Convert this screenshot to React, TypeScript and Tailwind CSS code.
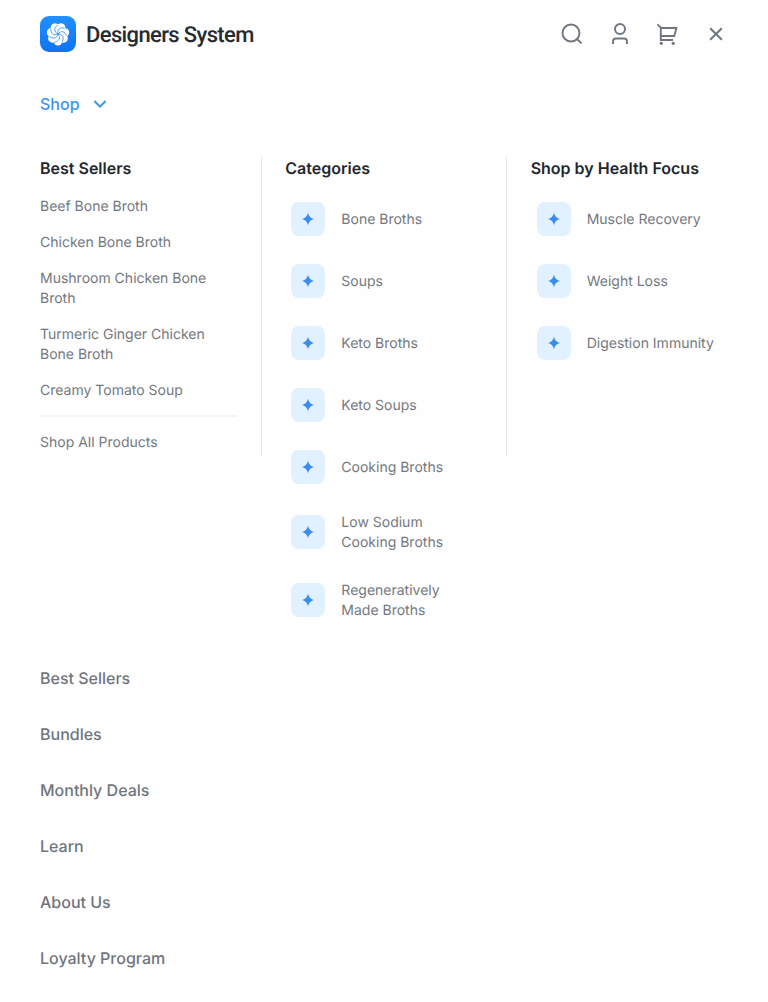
const bestSellers = [
  'Beef Bone Broth',
  'Chicken Bone Broth',
  'Mushroom Chicken Bone Broth',
  'Turmeric Ginger Chicken Bone Broth',
  'Creamy Tomato Soup',
];

const categories = [
  'Bone Broths',
  'Soups',
  'Keto Broths',
  'Keto Soups',
  'Cooking Broths',
  'Low Sodium Cooking Broths',
  'Regeneratively Made Broths',
];

const healthFocus = ['Muscle Recovery', 'Weight Loss', 'Digestion Immunity'];

const navLinks = ['Best Sellers', 'Bundles', 'Monthly Deals', 'Learn', 'About Us', 'Loyalty Program'];

const petals = [0, 1, 2, 3, 4, 5, 6].map((i) => 26 + (i * 360) / 7);

function Logo() {
  return (
    <svg width="36" height="36" viewBox="0 0 36 36" fill="none">
      <defs>
        <linearGradient id="logo-bg" x1="18" y1="0" x2="18" y2="36" gradientUnits="userSpaceOnUse">
          <stop stopColor="#2290ff" />
          <stop offset="1" stopColor="#0f73f2" />
        </linearGradient>
      </defs>
      <rect width="36" height="36" rx="9" fill="url(#logo-bg)" />
      {petals.map((a) => (
        <circle key={a} cx="18" cy="10.9" r="4.3" fill="#fff" transform={`rotate(${a} 18 18)`} />
      ))}
      <circle cx="18" cy="18" r="8" fill="#fff" />
      {petals.map((a) => (
        <path
          key={a}
          d="M18 18C15.2 14.6 16.6 10.6 21.4 9.9"
          stroke="#2a88f8"
          strokeWidth="0.75"
          transform={`rotate(${a} 18 18)`}
        />
      ))}
    </svg>
  );
}

function HeaderIcons() {
  return (
    <div className="flex items-center gap-6 text-[#70767e]">
      <svg width="24" height="24" viewBox="0 0 24 24" fill="none" stroke="currentColor" strokeWidth="1.9">
        <circle cx="11" cy="11" r="8.5" />
        <path d="M17.2 17.2L21.6 21.4" />
      </svg>
      <svg width="24" height="24" viewBox="0 0 24 24" fill="none" stroke="currentColor" strokeWidth="1.9">
        <circle cx="12" cy="7" r="5" />
        <path d="M5 22V19.5A3 3 0 0 1 8 16.5H16A3 3 0 0 1 19 19.5V22" />
      </svg>
      <svg width="24" height="24" viewBox="0 0 24 24" fill="none" stroke="currentColor" strokeWidth="1.9">
        <path d="M1.4 2.4L4.8 5.6V18H17" />
        <path d="M4.8 6H20.4L18.3 14H4.8" />
        <circle cx="5.3" cy="21.3" r="1.6" fill="currentColor" stroke="none" />
        <circle cx="17.2" cy="21.3" r="1.6" fill="currentColor" stroke="none" />
      </svg>
      <svg width="24" height="24" viewBox="0 0 24 24" fill="none" stroke="currentColor" strokeWidth="2">
        <path d="M6.2 6.2L17.8 17.8M17.8 6.2L6.2 17.8" />
      </svg>
    </div>
  );
}

function IconRow({ label }: { label: string }) {
  return (
    <li className="flex items-center gap-4 pl-1.5">
      <span className="flex size-[34px] shrink-0 items-center justify-center rounded-lg bg-[#e2f1ff]">
        <svg width="14" height="14" viewBox="0 0 14 14" fill="#3b8cf0">
          <path d="M7 .5C7.9 4.5 9.5 6.1 13.5 7C9.5 7.9 7.9 9.5 7 13.5C6.1 9.5 4.5 7.9 .5 7C4.5 6.1 6.1 4.5 7 .5Z" />
        </svg>
      </span>
      <span className="max-w-[130px] translate-y-px">{label}</span>
    </li>
  );
}

function Heading({ children }: { children: string }) {
  return <h2 className="text-base leading-6 font-semibold text-[#24272b]">{children}</h2>;
}

function Divider() {
  return <div className="-mx-[0.5px] h-[300px] w-px bg-[#e8eaec]" />;
}

export default function App() {
  return (
    <div className="min-h-[1002px] w-[768px] bg-[#fefefe] px-10 font-['Inter',sans-serif] text-[#74797f] [text-rendering:geometricPrecision]">
      <header className="flex h-[68px] items-center justify-between">
        <div className="flex items-center gap-2.5">
          <Logo />
          <span className="translate-y-px font-['Roboto',sans-serif] text-[22px] font-medium tracking-[-0.63px] text-[#272b30]">
            Designers System
          </span>
        </div>
        <HeaderIcons />
      </header>

      <button className="mt-6 flex h-6 items-center text-base font-medium text-[#3f94ee]">
        <span className="w-[52px] text-left">Shop</span>
        <svg width="16" height="16" viewBox="0 0 16 16" fill="none" stroke="currentColor" strokeWidth="2">
          <path d="M2.4 5L8 10.6L13.6 5" />
        </svg>
      </button>

      <section className="mt-10 flex h-[478px] items-start gap-6 text-sm leading-5">
        <div className="min-w-0 flex-1">
          <Heading>Best Sellers</Heading>
          <ul className="mt-[17px] flex flex-col gap-4">
            {bestSellers.map((item) => (
              <li key={item}>{item}</li>
            ))}
          </ul>
          <hr className="mt-3.5 border-t-2 border-[#f3f4f5]" />
          <p className="mt-4">Shop All Products</p>
        </div>
        <Divider />
        <div className="min-w-0 flex-1">
          <Heading>Categories</Heading>
          <ul className="mt-[22px] flex flex-col gap-7">
            {categories.map((item) => (
              <IconRow key={item} label={item} />
            ))}
          </ul>
        </div>
        <Divider />
        <div className="min-w-0 flex-1">
          <Heading>Shop by Health Focus</Heading>
          <ul className="mt-[22px] flex flex-col gap-7">
            {healthFocus.map((item) => (
              <IconRow key={item} label={item} />
            ))}
          </ul>
        </div>
      </section>

      <nav className="mt-8 flex flex-col gap-8 text-base leading-6 font-medium text-[#70757c]">
        {navLinks.map((item) => (
          <a key={item}>{item}</a>
        ))}
      </nav>
    </div>
  );
}
